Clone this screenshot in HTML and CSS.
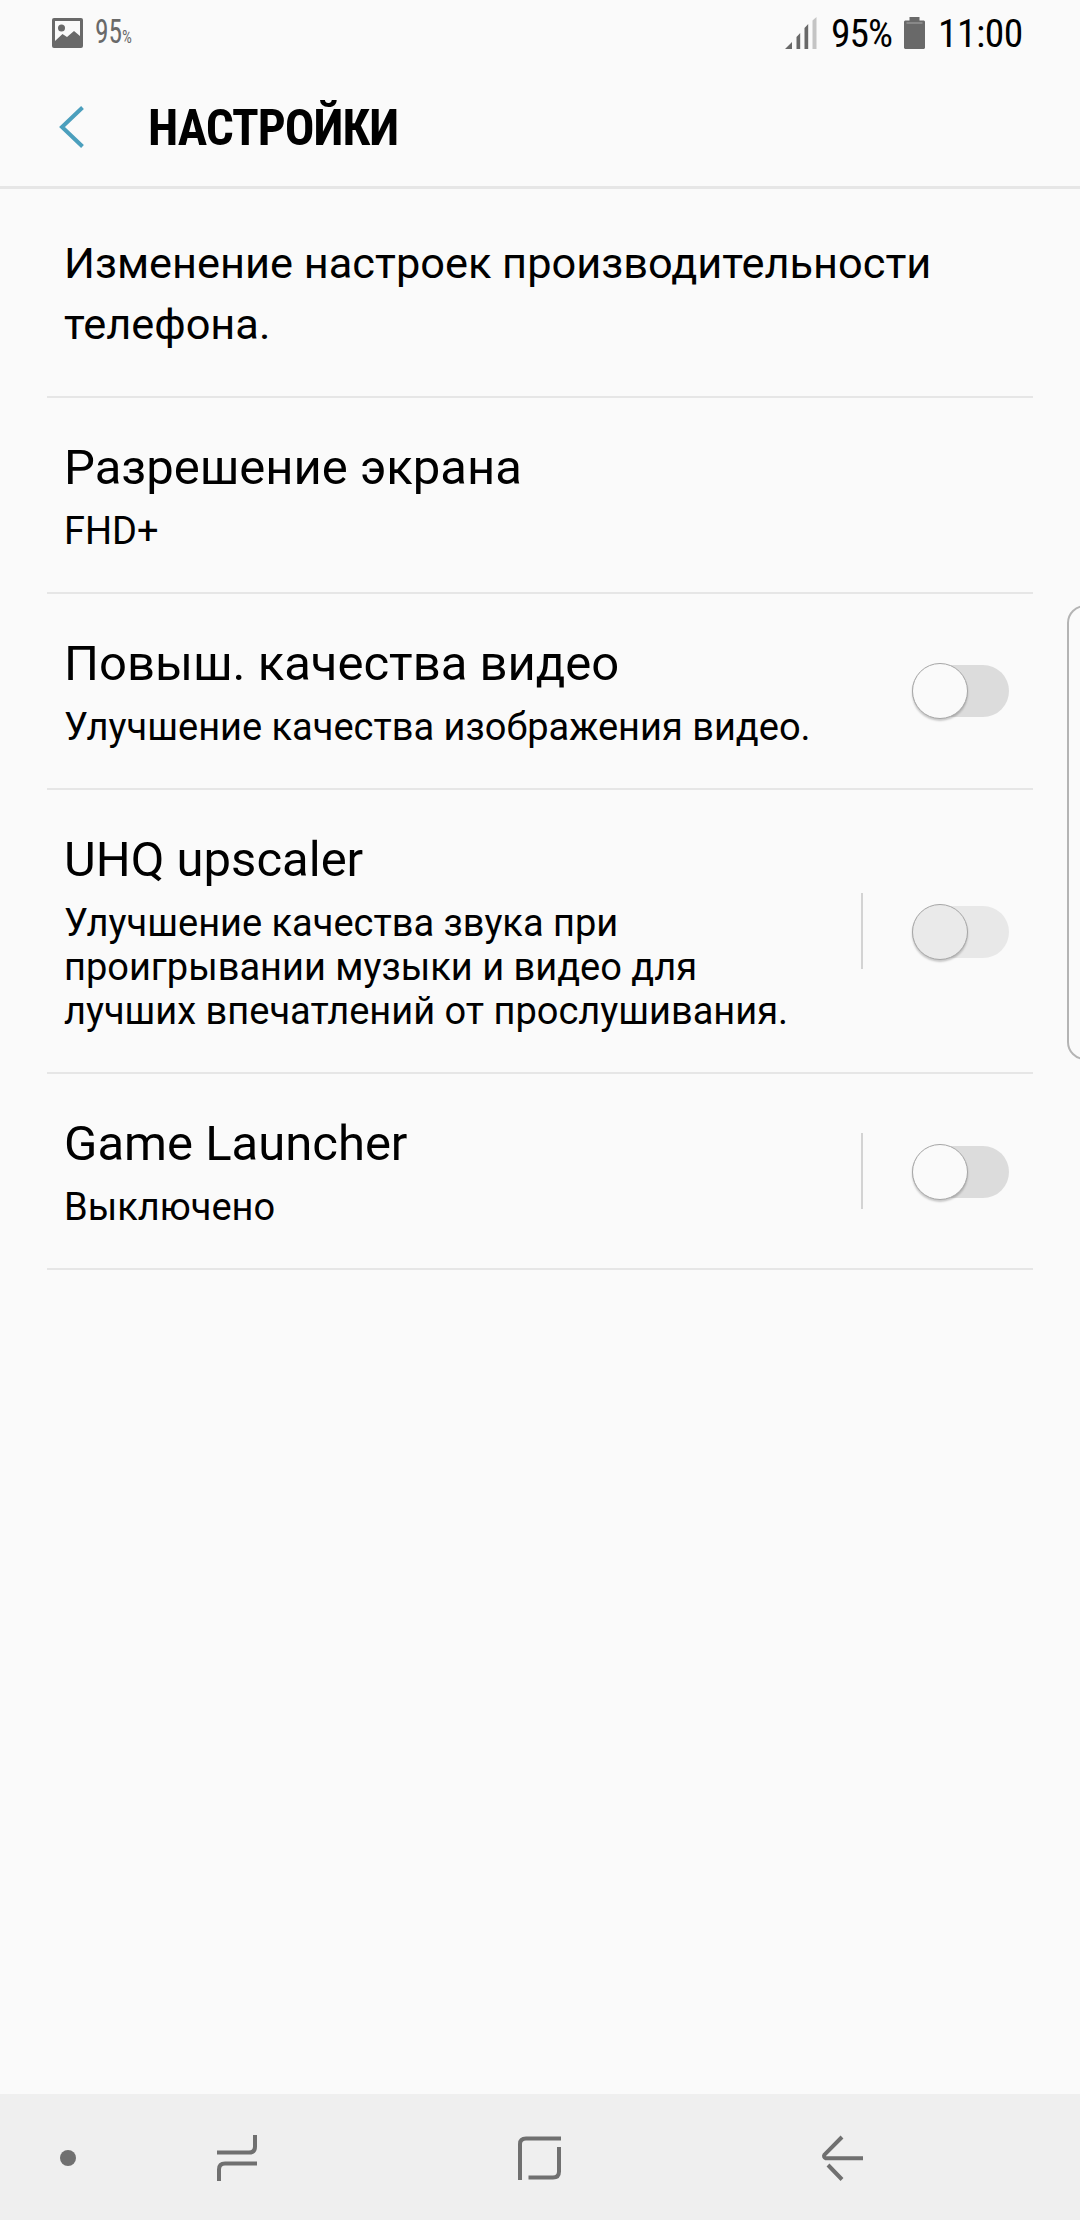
FILE: index.html
```html
<!DOCTYPE html>
<html lang="ru">
<head>
<meta charset="utf-8">
<title>Настройки</title>
<link rel="stylesheet" href="styles.css">
</head>
<body>
<div class="screen">
  <div class="status">
    <svg class="gallery" width="31" height="30" viewBox="0 0 31 30"><path fill="#696969" fill-rule="evenodd" d="M2 0H29Q31 0 31 2V28Q31 30 29 30H2Q0 30 0 28V2Q0 0 2 0ZM3 3V23L10.500 16L15 19L22 13L28 18V3Z"/><circle cx="9.500" cy="10" r="3.500" fill="#696969"/></svg>
    <span class="small-pct">95<small>%</small></span>
    <svg class="signal" width="32" height="32" viewBox="0 0 32 32"><path fill="#696969" d="M0 32L7 25V32ZM11.500 20L15.200 16V32H11.500ZM19.500 11L23.200 7V32H19.500Z"/><path fill="#c4c4c4" d="M27.500 3.500L31.500 0V32H27.500Z"/></svg>
    <span class="pct">95%</span>
    <svg class="battery" width="21" height="32" viewBox="0 0 21 32"><path fill="#696969" d="M5.500 0H15.500V3.500H20L21 4.500V31L20 32H1L0 31V4.500L1 3.500H5.500Z"/><path fill="#a8a8a8" d="M2.500 5.500H18.500V6.500H2.500Z"/></svg>
    <span class="clock">11:00</span>
  </div>
  <header class="header">
    <svg class="back" width="26" height="42" viewBox="0 0 26 42"><path fill="none" stroke="#4b9fbd" stroke-width="4" d="M23.500 1.500L3 21L23.500 40.500"/></svg>
    <h1>НАСТРОЙКИ</h1>
  </header>
  <main class="list">
    <p class="intro">Изменение настроек производительности телефона.</p>
    <section class="row"><div class="copy"><h2>Разрешение экрана</h2><p>FHD+</p></div></section>
    <section class="row"><div class="copy"><h2>Повыш. качества видео</h2><p>Улучшение качества изображения видео.</p></div><div class="switch raised"><i></i></div></section>
    <section class="row"><div class="copy"><h2>UHQ upscaler</h2><p>Улучшение качества звука при<br>проигрывании музыки и видео для<br>лучших впечатлений от прослушивания.</p></div><div class="divider"></div><div class="switch disabled"><i></i></div></section>
    <section class="row"><div class="copy"><h2>Game Launcher</h2><p>Выключено</p></div><div class="divider"></div><div class="switch"><i></i></div></section>
  </main>
  <div class="edge"></div>
  <nav class="nav">
    <i class="dot"></i>
    <svg class="recents" width="40" height="46" viewBox="0 0 40 46"><path d="M0 17.500H32Q38 17.500 38 11.500V0M40 28.500H8Q2 28.500 2 34.500V46"/></svg>
    <svg class="home" width="43" height="44" viewBox="0 0 43 44"><path d="M2 44V8Q2 2.500 8 2.500H43M41 11V35.500Q41 41.500 35 41.500H10.500"/></svg>
    <svg class="return" width="42" height="46" viewBox="0 0 42 46"><path d="M42 23.300H5Q2 22 3.500 19.700L21 2M7 30L21 44.500"/></svg>
  </nav>
</div>
</body>
</html>
```
FILE: styles.css
```css
* { box-sizing: border-box; }
body { margin: 0; }
h1, h2, p { margin: 0; font-weight: 400; }
svg { display: block; flex: none; }
.screen { position: relative; width: 1080px; height: 2220px; background: #fafafa; color: #000; font-family: Roboto, sans-serif; display: flex; flex-direction: column; overflow: hidden; }
.status { height: 65px; display: flex; align-items: center; padding: 0 58px 0 52px; white-space: nowrap; }
.small-pct { width: 50px; margin: 2px 0 0 12px; font: 33.5px/65px "Roboto Condensed", Roboto, sans-serif; color: #696969; transform: scaleX(.82); transform-origin: left; }
.small-pct small { font-size: 19px; }
.signal { margin-left: auto; }
.pct { width: 61px; margin-left: 14px; font: 39.5px/65px "Roboto Condensed", Roboto, sans-serif; letter-spacing: -1px; padding-top: 1px; }
.battery { margin-left: 12px; }
.clock { width: 84px; margin-left: 13px; font: 39.5px/65px "Roboto Condensed", Roboto, sans-serif; letter-spacing: -0.5px; padding-top: 2px; }
.header { height: 124px; border-bottom: 3px solid #e6e6e6; display: flex; align-items: center; padding: 3px 0 0 59px; }
h1 { margin-left: 63px; font: 700 49.3px/60px "Roboto Condensed", Roboto, sans-serif; letter-spacing: -1px; padding-top: 1px; }
.list { flex: 1; padding: 0 47px; }
.intro { height: 209px; padding: 44px 17px 0; font-size: 43.35px; line-height: 61px; border-bottom: 2px solid #e6e6e6; }
.row { border-bottom: 2px solid #e6e6e6; padding: 41px 24px 39px 17px; display: flex; align-items: center; }
.copy { flex: 1; }
h2 { font-size: 49px; line-height: 58px; }
.copy p { font-size: 38px; line-height: 44px; margin-top: 12px; white-space: nowrap; }
.divider { width: 2px; height: 76px; background: #d3d3d3; margin: -2px 49px 0 0; }
.switch { position: relative; width: 97px; height: 52px; border-radius: 26px; background: #dcdcdc; }
.switch i { position: absolute; left: 0; top: -2px; width: 56px; height: 56px; border-radius: 50%; background: #fafafa; border: 1px solid #a6a6a6; box-shadow: 0 2px 2px rgba(0, 0, 0, .2); }
.raised { margin-top: -2px; }
.disabled { background: #e8e8e8; }
.disabled i { background: #eaeaea; }
.edge { position: absolute; left: 1067px; top: 605px; width: 40px; height: 455px; border: 2px solid #b4b4b4; border-radius: 18px; background: #fafafa; }
.nav { height: 126px; background: #efefef; display: flex; align-items: center; padding: 2px 0 0 60px; }
.nav path { fill: none; stroke: #707070; stroke-width: 4; }
.dot { width: 16px; height: 16px; border-radius: 50%; background: #707070; }
.recents { margin-left: 141px; }
.home { margin-left: 261px; }
.return { margin-left: 260px; }
```
